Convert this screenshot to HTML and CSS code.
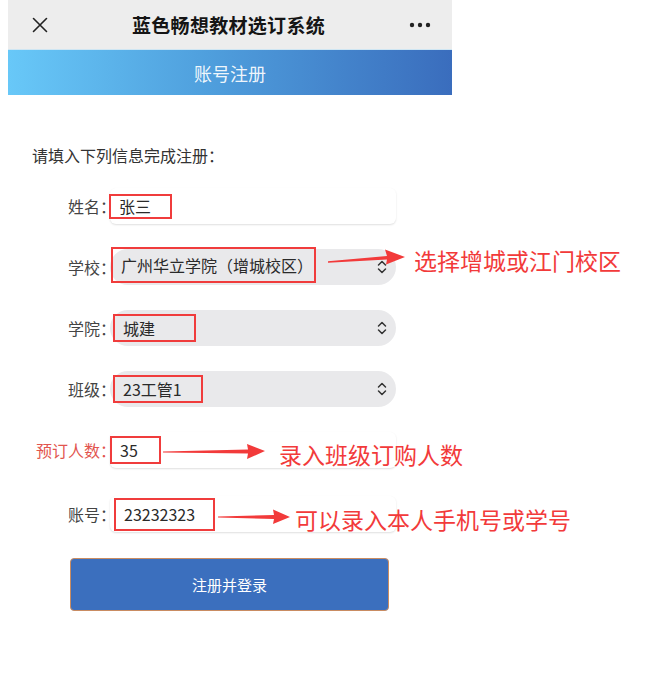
FILE: index.html
```html
<!DOCTYPE html>
<html lang="zh-CN">
<head>
<meta charset="utf-8">
<title>账号注册</title>
<link rel="stylesheet" href="styles.css">
</head>
<body>
<div class="phone">
  <header class="topbar">
    <svg class="icon-close" width="16" height="16" viewBox="0 0 16 16"><path d="M1.5 1.5 L14.5 14.5 M14.5 1.5 L1.5 14.5" stroke="#222" stroke-width="1.6" fill="none" stroke-linecap="round"/></svg>
    <h1 class="title">蓝色畅想教材选订系统</h1>
    <svg class="icon-more" width="22" height="6" viewBox="0 0 22 6"><circle cx="3" cy="3" r="2.2" fill="#222"/><circle cx="11" cy="3" r="2.2" fill="#222"/><circle cx="19" cy="3" r="2.2" fill="#222"/></svg>
  </header>
  <div class="banner">账号注册</div>

  <p class="intro">请填入下列信息完成注册：</p>

  <form class="form">
    <div class="row">
      <label class="label">姓名：</label>
      <div class="field field-input">
        <span class="mark mark-name">张三</span>
      </div>
    </div>

    <div class="row">
      <label class="label">学校：</label>
      <div class="field field-select">
        <span class="mark mark-school">广州华立学院（增城校区）</span>
        <svg class="chev" width="10" height="14" viewBox="0 0 10 14"><path d="M1.5 5 L5 1.5 L8.5 5 M1.5 9 L5 12.5 L8.5 9" stroke="#333" stroke-width="1.5" fill="none" stroke-linecap="round" stroke-linejoin="round"/></svg>
      </div>
      <div class="note note-school">
        <svg class="arrow" width="78" height="32" viewBox="0 0 78 32"><polygon points="0,17.3 59,12 57,5.5 77,13 58,20.5 59,15.5 0,18.7" fill="#f23a3a"/></svg>
        <span class="note-text">选择增城或江门校区</span>
      </div>
    </div>

    <div class="row">
      <label class="label">学院：</label>
      <div class="field field-select">
        <span class="mark mark-college">城建</span>
        <svg class="chev" width="10" height="14" viewBox="0 0 10 14"><path d="M1.5 5 L5 1.5 L8.5 5 M1.5 9 L5 12.5 L8.5 9" stroke="#333" stroke-width="1.5" fill="none" stroke-linecap="round" stroke-linejoin="round"/></svg>
      </div>
    </div>

    <div class="row">
      <label class="label">班级：</label>
      <div class="field field-select">
        <span class="mark mark-class">23工管1</span>
        <svg class="chev" width="10" height="14" viewBox="0 0 10 14"><path d="M1.5 5 L5 1.5 L8.5 5 M1.5 9 L5 12.5 L8.5 9" stroke="#333" stroke-width="1.5" fill="none" stroke-linecap="round" stroke-linejoin="round"/></svg>
      </div>
    </div>

    <div class="row">
      <label class="label label-red">预订人数：</label>
      <div class="field field-input">
        <span class="mark mark-count">35</span>
      </div>
      <div class="note note-count">
        <svg class="arrow" width="103" height="32" viewBox="0 0 103 32"><polygon points="0,13.5 85,11.5 84,6 102,13 84,21 85,15.5 0,14.5" fill="#f23a3a"/></svg>
        <span class="note-text">录入班级订购人数</span>
      </div>
    </div>

    <div class="row row-last">
      <label class="label">账号：</label>
      <div class="field field-input">
        <span class="mark mark-account">23232323</span>
      </div>
      <div class="note note-account">
        <svg class="arrow" width="73" height="32" viewBox="0 0 73 32"><polygon points="0,13.5 56,12 55,6.5 72,14 55,21 56,16 0,14.5" fill="#f23a3a"/></svg>
        <span class="note-text">可以录入本人手机号或学号</span>
      </div>
    </div>

    <button type="button" class="submit">注册并登录</button>
  </form>
</div>
</body>
</html>
```

FILE: styles.css
```css
* {
  box-sizing: border-box;
}

body {
  margin: 0;
  background: #ffffff;
  font-family: "Noto Sans CJK SC", "Noto Sans", sans-serif;
  color: #333;
}

.phone {
  width: 444px;
  margin-left: 8px;
}

.topbar {
  height: 49px;
  background: #ededed;
  display: flex;
  align-items: center;
  justify-content: space-between;
  padding: 0 21px 0 24px;
}

.title {
  margin: 0;
  font-size: 19px;
  font-weight: 700;
  color: #151515;
  letter-spacing: 0.3px;
}

.banner {
  height: 46px;
  background: linear-gradient(90deg, #68c8f8 0%, #4f9fdd 45%, #3a6dbd 100%);
  border-top: 1px solid #cfe6f3;
  color: rgba(255, 255, 255, 0.92);
  font-size: 18px;
  display: flex;
  align-items: center;
  justify-content: center;
}

.intro {
  margin: 50px 0 0;
  padding-left: 24px;
  font-size: 16px;
  line-height: 20px;
  color: #333;
}

.form {
  margin-top: 23px;
  display: flex;
  flex-direction: column;
  gap: 25px;
}

.row {
  position: relative;
  display: flex;
  align-items: center;
  height: 36px;
}

.row-last {
  margin-top: 3px;
}

.label {
  width: 102px;
  padding-right: 2px;
  text-align: right;
  font-size: 16px;
  font-feature-settings: "halt" 1;
  color: #444;
  white-space: nowrap;
}

.label-red {
  color: #e2554e;
}

.field {
  width: 286px;
  height: 36px;
  display: flex;
  align-items: center;
  justify-content: space-between;
}

.field-input {
  background: #fff;
  border-radius: 6px;
  box-shadow: 0 1px 2px rgba(0, 0, 0, 0.13);
}

.field-select {
  background: #e9e9eb;
  border-radius: 18px;
  padding-right: 9px;
}

.mark {
  display: flex;
  align-items: center;
  border: 2px solid #f03c3c;
  padding-left: 8px;
  font-size: 16px;
  color: #2a2a2a;
  white-space: nowrap;
}

.mark-name {
  width: 63px;
  height: 25px;
  margin-left: -1px;
}

.mark-school {
  width: 205px;
  height: 36px;
  margin-left: 1px;
  margin-top: -5px;
}

.mark-college {
  width: 83px;
  height: 28px;
  margin-left: 3px;
}

.mark-class {
  width: 90px;
  height: 28px;
  margin-left: 3px;
}

.mark-count {
  width: 51px;
  height: 28px;
  margin-left: 0;
}

.mark-account {
  width: 101px;
  height: 33px;
  margin-left: 4px;
}

.chev {
  display: block;
}

.note {
  position: absolute;
  display: flex;
  align-items: center;
  height: 32px;
  white-space: nowrap;
}

.arrow {
  display: block;
  flex: none;
}

.note-text {
  font-size: 23px;
  line-height: 32px;
  color: #f23a3a;
}

.note-school {
  left: 320px;
  top: -5px;
  gap: 8px;
}

.note-count {
  left: 155px;
  top: 6px;
  gap: 13px;
}

.note-account {
  left: 210px;
  top: 7px;
  gap: 4px;
}

.submit {
  margin: 1px 0 0 62px;
  width: 319px;
  height: 53px;
  background: #3b6fbe;
  border: 1px solid #c98c62;
  border-radius: 4px;
  color: #fff;
  font-family: "Noto Sans CJK SC", sans-serif;
  font-size: 15px;
  cursor: pointer;
}
```
